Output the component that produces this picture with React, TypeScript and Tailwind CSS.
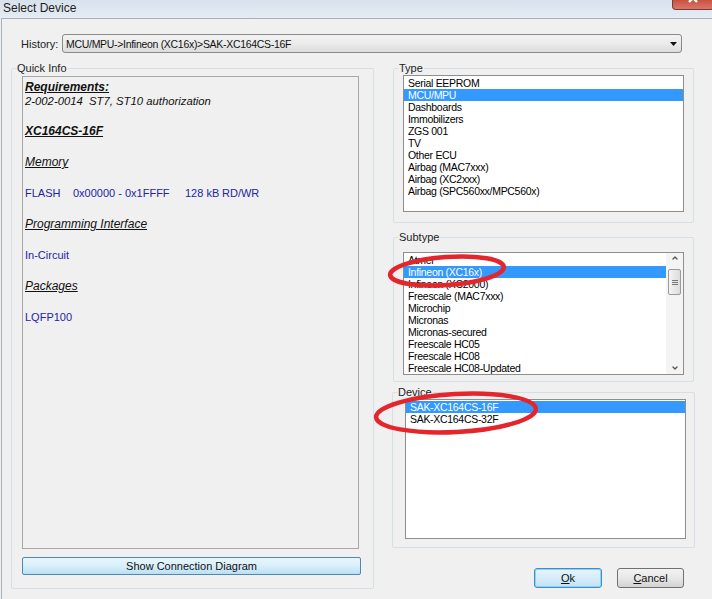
import { ChevronDown } from 'lucide-react'

const TYPES = [
  'Serial EEPROM', 'MCU/MPU', 'Dashboards', 'Immobilizers', 'ZGS 001', 'TV',
  'Other ECU', 'Airbag (MAC7xxx)', 'Airbag (XC2xxx)', 'Airbag (SPC560xx/MPC560x)',
]

const SUBTYPES = [
  'Atmel', 'Infineon (XC16x)', 'Infineon (XC2000)', 'Freescale (MAC7xxx)', 'Microchip',
  'Micronas', 'Micronas-secured', 'Freescale HC05', 'Freescale HC08', 'Freescale HC08-Updated',
]

const DEVICES = ['SAK-XC164CS-16F', 'SAK-XC164CS-32F']

const sans = "font-['Liberation_Sans',Arial,sans-serif]"

function ListItems({ items, selected }: { items: string[]; selected: string }) {
  return (
    <>
      {items.map((it) => (
        <div
          key={it}
          className={`h-[12px] pl-[4px] text-[10.5px] leading-[12px] whitespace-nowrap tracking-[-0.3px] ${
            it === selected ? 'bg-[#3399ff] text-white' : 'text-black'
          }`}
        >
          {it}
        </div>
      ))}
    </>
  )
}

function Group({
  label, className, inner, children,
}: { label: string; className: string; inner: string; children: React.ReactNode }) {
  return (
    <fieldset className={`rounded-[2px] border border-[#d5dfe5] ${className}`}>
      <legend className="ml-[4px] px-[1px] text-[11px] leading-[12px] text-[#222]">{label}</legend>
      <div className={inner}>{children}</div>
    </fieldset>
  )
}

function Heading({ children, bold, className = '' }: { children: React.ReactNode; bold?: boolean; className?: string }) {
  return (
    <p className={`text-[12px] leading-[14px] italic underline text-[#111] ${bold ? 'font-bold' : ''} ${className}`}>
      {children}
    </p>
  )
}

export default function App() {
  return (
    <div className={`relative flex h-[599px] w-[712px] flex-col overflow-hidden bg-[#f0f0f0] ${sans}`}>
      {/* title bar */}
      <div className="flex h-[18px] shrink-0 items-start bg-gradient-to-b from-[#d8e2ed] to-[#e4ebf3]">
        <span className="pl-[3px] pt-[1px] text-[12px] leading-[14px] text-[#1e1e1e]">Select Device</span>
        <div className="ml-auto mr-[-2px] flex h-[10px] w-[42px] items-end justify-center overflow-hidden rounded-b-[4px] border border-t-0 border-[#7a3a32] bg-gradient-to-b from-[#c9513f] to-[#d9776a]">
          <svg width="12" height="12" viewBox="0 0 12 12" className="mb-[5px]">
            <path d="M2 2 L10 10 M10 2 L2 10" stroke="white" strokeWidth="2.4" />
          </svg>
        </div>
      </div>

      <div className="ml-[1px] flex flex-1 flex-col border-l border-t border-[#a9b1ba]">
        {/* history */}
        <div className="mt-[15px] flex items-center pl-[19px]">
          <span className="w-[41px] text-[11px] leading-[12px] text-[#222]">History:</span>
          <div className="flex h-[19px] w-[620px] items-center rounded-[3px] border border-[#8a8a8a] bg-gradient-to-b from-[#f3f3f3] via-[#ebebeb] to-[#dcdcdc] pl-[3px] pr-[4px]">
            <span className="flex-1 text-[10.5px] leading-[12px] tracking-[-0.3px] text-[#111]">
              MCU/MPU-&gt;Infineon (XC16x)&gt;SAK-XC164CS-16F
            </span>
            <svg width="7" height="4" viewBox="0 0 7 4">
              <path d="M0 0 H7 L3.5 4 Z" fill="#111" />
            </svg>
          </div>
        </div>

        <div className="mt-[9px] flex">
          {/* quick info */}
          <Group label="Quick Info" className="ml-[9px] h-[527px] w-[363px]" inner="pl-[10px] pt-[2px]">
            <div className="h-[473px] w-[337px] border border-[#a7a7a7] pl-[2px] pt-[3px]">
              <Heading bold>Requirements:</Heading>
              <p className="text-[11.3px] italic leading-[14px] text-[#111]">2-002-0014&nbsp; ST7, ST10 authorization</p>
              <Heading bold className="mt-[16px]">XC164CS-16F</Heading>
              <Heading className="mt-[17px]">Memory</Heading>
              <p className="mt-[17px] flex whitespace-nowrap text-[11px] leading-[14px] text-[#2424a4]">
                <span className="w-[48px]">FLASH</span>
                <span className="w-[112px]">0x00000 - 0x1FFFF</span>
                <span className="w-[37px]">128 kB</span>
                <span>RD/WR</span>
              </p>
              <Heading className="mt-[17px]">Programming Interface</Heading>
              <p className="mt-[17px] text-[11px] leading-[14px] text-[#2424a4]">In-Circuit</p>
              <Heading className="mt-[17px]">Packages</Heading>
              <p className="mt-[17px] text-[11px] leading-[14px] text-[#2424a4]">LQFP100</p>
            </div>
            <button className="mt-[8px] h-[18px] w-[339px] rounded-[2px] border border-[#4d89b4] bg-gradient-to-b from-[#e8f5fc] via-[#d9effa] to-[#b9e0f5] text-[11px] leading-[12px] text-[#111]">
              Show Connection Diagram
            </button>
          </Group>

          {/* right column */}
          <div className="ml-[19px] flex flex-col">
            <Group label="Type" className="h-[161px] w-[301px]" inner="pl-[9px] pt-[1px]">
              <div className="h-[137px] w-[281px] border border-[#8e8e8e] bg-white pt-[1px]">
                <ListItems items={TYPES} selected="MCU/MPU" />
              </div>
            </Group>

            <Group label="Subtype" className="mt-[8px] h-[151px] w-[301px]" inner="pl-[9px] pt-[9px]">
              <div className="flex h-[123px] w-[281px] border border-[#8e8e8e] bg-white">
                <div className="flex-1 overflow-hidden">
                  <div className="mt-[1px]">
                    <ListItems items={SUBTYPES} selected="Infineon (XC16x)" />
                  </div>
                </div>
                <div className="flex w-[17px] flex-col items-center bg-[#f4f4f4]">
                  <ChevronDown className="mt-[1px] h-[8px] w-[8px] rotate-180 text-[#555]" strokeWidth={4} />
                  <div className="mt-[7px] flex h-[26px] w-[13px] flex-col items-center justify-center gap-[1px] rounded-[2px] border border-[#9a9a9a] bg-gradient-to-r from-[#f4f4f4] to-[#dcdcdc]">
                    <div className="h-[1px] w-[6px] bg-[#777]" />
                    <div className="h-[1px] w-[6px] bg-[#777]" />
                    <div className="h-[1px] w-[6px] bg-[#777]" />
                  </div>
                  <ChevronDown className="mt-auto mb-[2px] h-[8px] w-[8px] text-[#555]" strokeWidth={4} />
                </div>
              </div>
            </Group>

            <Group label="Device" className="ml-[-1px] mt-[4px] h-[162px] w-[303px]" inner="pl-[12px] pt-[1px]">
              <div className="h-[140px] w-[281px] border border-[#8e8e8e] bg-white pt-[1px]">
                <ListItems items={DEVICES} selected="SAK-XC164CS-16F" />
              </div>
            </Group>

            <div className="mt-[20px] flex gap-[15px] pl-[141px]">
              <button className="h-[20px] w-[68px] rounded-[3px] border border-[#3c8fc9] bg-gradient-to-b from-[#e6f4fc] via-[#d6edfa] to-[#bee3f6] text-[11px] leading-[12px] text-[#111] shadow-[inset_0_0_0_1px_#8fd0f3]">
                <span className="underline">O</span>k
              </button>
              <button className="h-[20px] w-[67px] rounded-[3px] border border-[#707070] bg-gradient-to-b from-[#f2f2f2] via-[#e8e8e8] to-[#d2d2d2] text-[11px] leading-[12px] text-[#111]">
                <span className="underline">C</span>ancel
              </button>
            </div>
          </div>
        </div>
      </div>

      {/* red marker ellipses drawn over the dialog */}
      <svg className="pointer-events-none absolute left-0 top-0" width="712" height="599">
        <ellipse cx="447" cy="271" rx="57" ry="14" transform="rotate(-4 447 271)" fill="none" stroke="#e4252b" strokeWidth="4.5" />
        <ellipse cx="456" cy="413" rx="80" ry="19" transform="rotate(-3 456 413)" fill="none" stroke="#e4252b" strokeWidth="4.5" />
      </svg>
    </div>
  )
}
